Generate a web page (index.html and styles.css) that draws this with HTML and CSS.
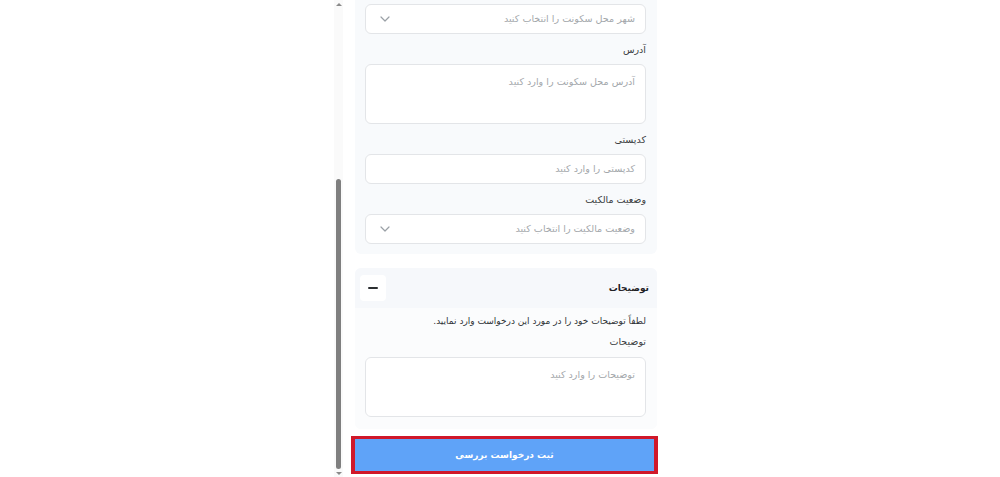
FILE: index.html
```html
<!DOCTYPE html>
<html lang="fa" dir="rtl">
<head>
  <meta charset="UTF-8">
  <meta name="viewport" content="width=device-width, initial-scale=1.0">
  <title>ثبت درخواست بررسی</title>
  <link rel="stylesheet" href="styles.css">
</head>
<body>
  <div class="frame">
    <div class="content">
      <!-- مشخصات محل سکونت -->
      <div class="card card-top">
        <div class="select">
          <span class="placeholder">شهر محل سکونت را انتخاب کنید</span>
          <svg class="chevron" width="10" height="6" viewBox="0 0 10 6"><path d="M1 1l4 4 4-4" fill="none" stroke="#9aa0a6" stroke-width="1.2" stroke-linecap="round" stroke-linejoin="round"/></svg>
        </div>

        <label class="label">آدرس</label>
        <div class="textarea"><span class="placeholder">آدرس محل سکونت را وارد کنید</span></div>

        <label class="label">کدپستی</label>
        <div class="input"><span class="placeholder">کدپستی را وارد کنید</span></div>

        <label class="label">وضعیت مالکیت</label>
        <div class="select">
          <span class="placeholder">وضعیت مالکیت را انتخاب کنید</span>
          <svg class="chevron" width="10" height="6" viewBox="0 0 10 6"><path d="M1 1l4 4 4-4" fill="none" stroke="#9aa0a6" stroke-width="1.2" stroke-linecap="round" stroke-linejoin="round"/></svg>
        </div>
      </div>

      <!-- توضیحات -->
      <div class="card card-notes">
        <div class="card-header">
          <span class="card-title">توضیحات</span>
          <span class="toggle"><span class="minus"></span></span>
        </div>
        <div class="card-body">
          <p class="hint">لطفاً توضیحات خود را در مورد این درخواست وارد نمایید.</p>
          <label class="label">توضیحات</label>
          <div class="textarea"><span class="placeholder">توضیحات را وارد کنید</span></div>
        </div>
      </div>

      <div class="submit-wrap">
        <button class="submit">ثبت درخواست بررسی</button>
      </div>
    </div>

    <div class="scrollbar">
      <span class="arrow up"></span>
      <div class="track"><div class="thumb"></div></div>
      <span class="arrow down"></span>
    </div>
  </div>
</body>
</html>
```

FILE: styles.css
```css
html, body {
  margin: 0;
  padding: 0;
  background: #fff;
  height: 477px;
  overflow: hidden;
}

body {
  font-family: 'DejaVu Sans', 'Noto Sans', sans-serif;
  color: #2f3337;
}

.frame {
  width: 332px;
  margin: 0 auto;
  height: 477px;
  display: flex;
  flex-direction: row;
}

.content {
  flex: 1;
  padding-right: 9px;
  padding-left: 12px;
}

/* scrollbar of the inner panel */
.scrollbar {
  width: 9px;
  display: flex;
  flex-direction: column;
  align-items: center;
  background: #fafafa;
}

.arrow {
  width: 0;
  height: 0;
  border-left: 3px solid transparent;
  border-right: 3px solid transparent;
}

.arrow.up {
  margin-top: 3px;
  border-bottom: 3px solid #8a8a8a;
}

.arrow.down {
  margin-bottom: 2px;
  border-top: 3px solid #8a8a8a;
}

.track {
  flex: 1;
  width: 100%;
  display: flex;
  flex-direction: column;
  justify-content: flex-end;
  padding: 0 0 3px;
}

.thumb {
  height: 290px;
  margin: 0 2px;
  background: #7f7f7f;
  border-radius: 3px;
}

.card {
  background: #f8fafc;
  border-radius: 6px;
}

.card-top {
  padding: 4px 11px 10px 10px;
  border-top-left-radius: 0;
  border-top-right-radius: 0;
}

.select, .input {
  height: 28px;
  background: #fff;
  border: 1px solid #e3e5e8;
  border-radius: 6px;
  display: flex;
  align-items: center;
  justify-content: space-between;
  padding: 0 10px 0 14px;
}

.textarea {
  height: 60px;
  background: #fff;
  border: 1px solid #e3e5e8;
  border-radius: 6px;
  padding: 5px 10px;
  box-sizing: border-box;
}

.placeholder {
  font-size: 9.6px;
  color: #a3a7ab;
  line-height: 16px;
}

.chevron {
  display: block;
}

.label {
  display: block;
  font-size: 9.5px;
  color: #3a3d41;
  line-height: 14px;
  margin: 9px 0 7px;
}

.card-notes {
  margin-top: 14px;
  overflow: hidden;
}

.card-header {
  height: 40px;
  display: flex;
  align-items: center;
  justify-content: space-between;
  padding: 0 8px 0 5px;
  background: #f6f8fb;
}

.card-title {
  font-size: 9px;
  font-weight: bold;
  color: #1f2226;
}

.toggle {
  width: 26px;
  height: 26px;
  background: #fff;
  border-radius: 4px;
  display: flex;
  align-items: center;
  justify-content: center;
}

.minus {
  width: 10px;
  height: 2px;
  background: #2b2e31;
  border-radius: 1px;
}

.card-body {
  background: #fbfcfd;
  padding: 4px 11px 12px 10px;
}

.hint {
  margin: 0;
  font-size: 9px;
  line-height: 18px;
  color: #2f3337;
}

.card-body .label {
  margin: 5px 0 8px;
}

.submit-wrap {
  margin-top: 7px;
  margin-left: -4px;
  margin-right: -1px;
  border: 4px solid #d0182a;
  border-top-width: 3px;
  border-bottom-width: 3px;
}

.submit {
  display: block;
  width: 100%;
  height: 32px;
  border: none;
  background: #5fa3f8;
  color: #fff;
  font-family: inherit;
  font-size: 9px;
  font-weight: bold;
  cursor: pointer;
}
```
